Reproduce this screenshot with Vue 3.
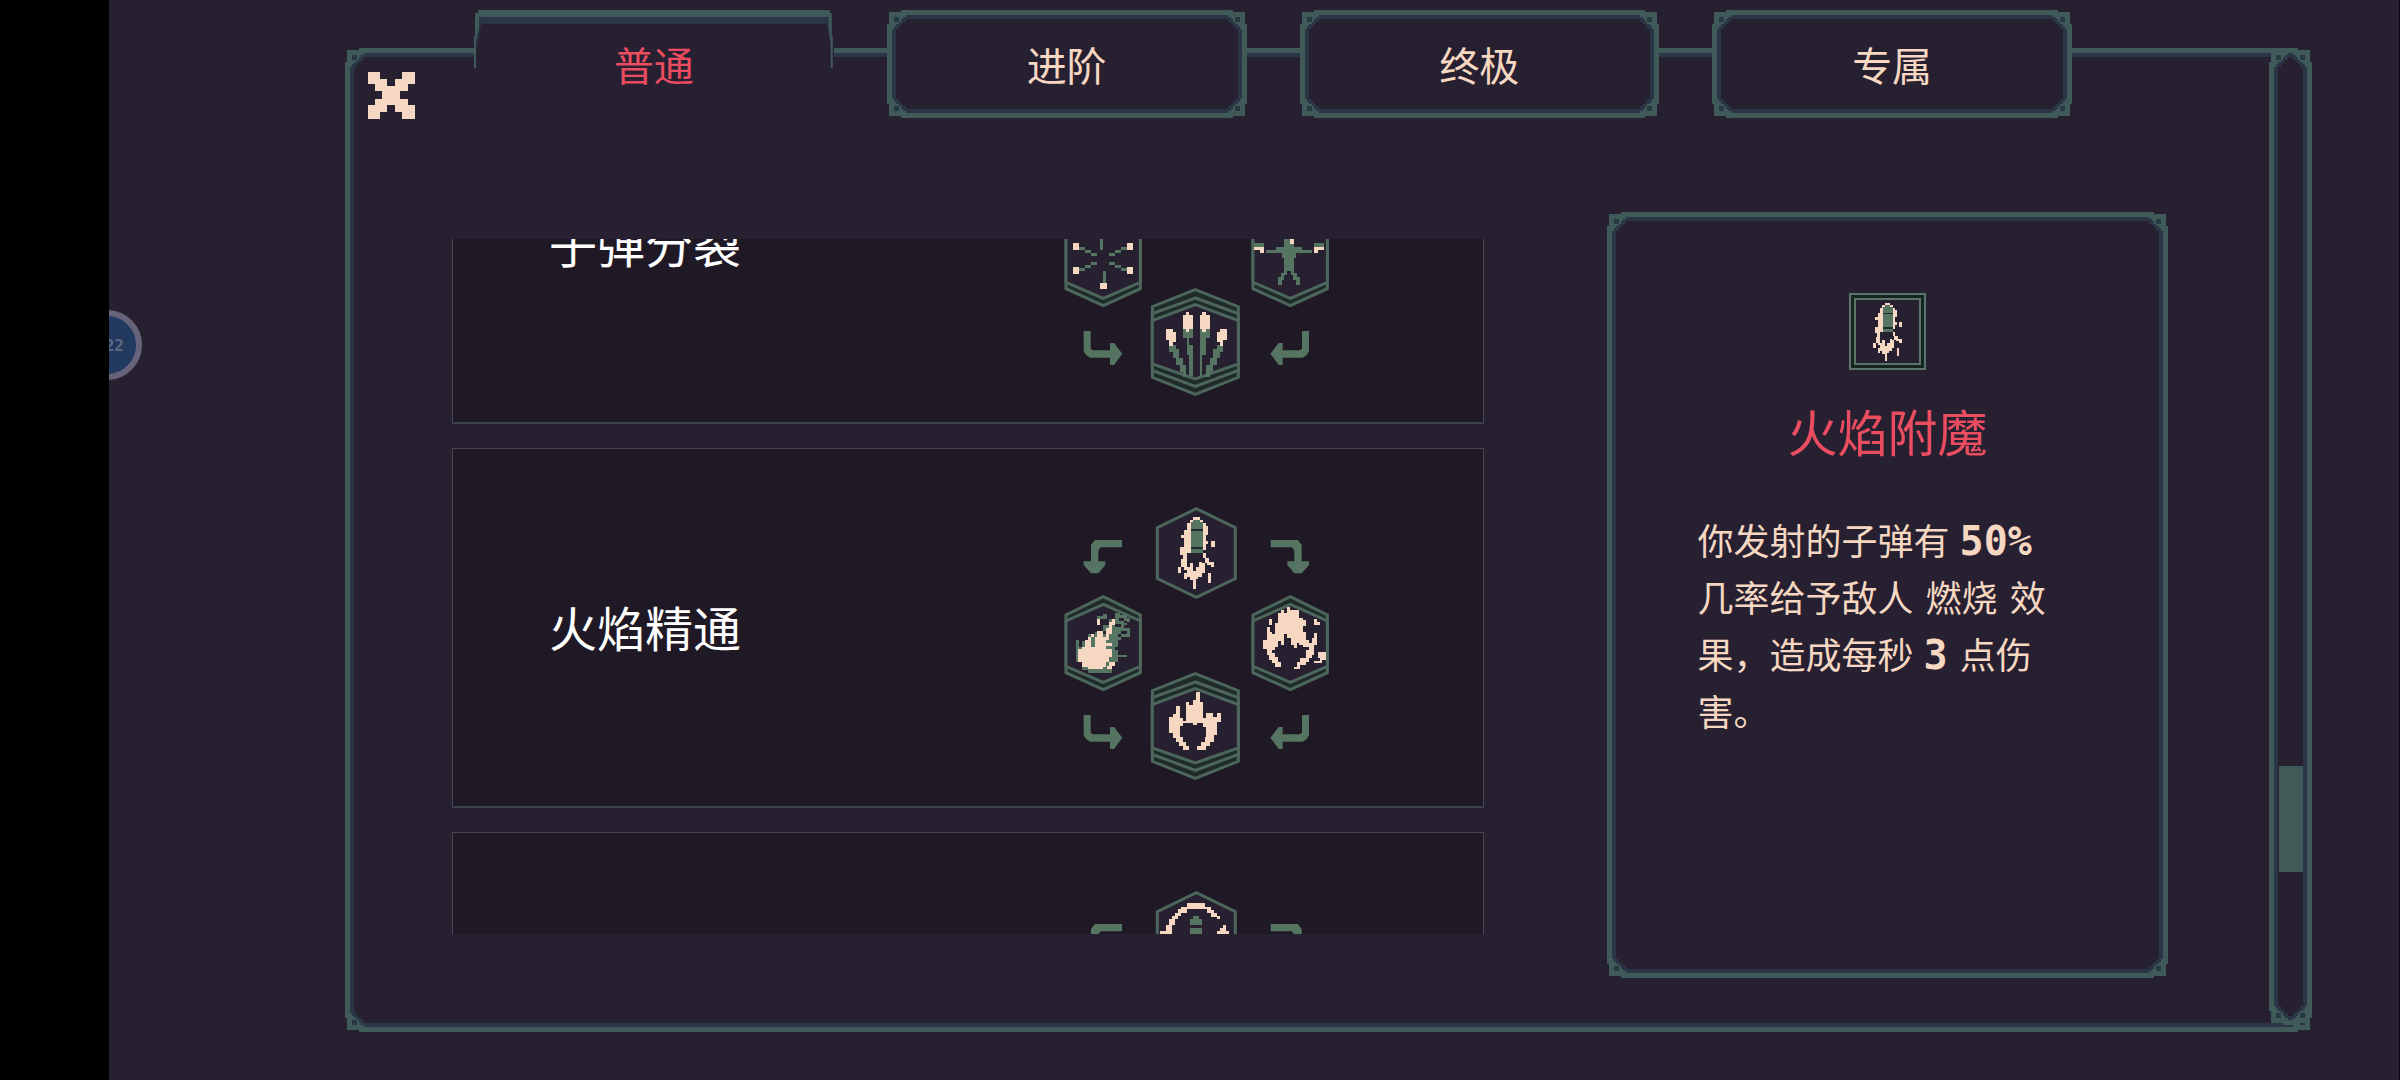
<script setup>
import { ref } from 'vue'

const tabs = ['普通', '进阶', '终极', '专属']
const active = ref(0)

const cards = [
  { key: 'split', name: '子弹分裂' },
  { key: 'fire', name: '火焰精通' },
  { key: 'orbit', name: '' }
]
</script>

<template>
  <div class="app">
    <div class="notch"></div>
    <main class="stage">
      <div class="badge"><span>22</span></div>

      <nav class="tabs">
        <button
          v-for="(tab, i) in tabs"
          :key="tab"
          type="button"
          class="tab"
          :class="i === active ? 'tab-active' : 'framed'"
          @click="active = i"
        >
          <svg v-if="i === active" class="tab-edge" viewBox="0 0 360 108" preserveAspectRatio="none" aria-hidden="true">
            <path fill="#2a3548" d="M5 7H355V14H5Z" />
            <path fill="#405a5a" d="M4 0H356V7H4Z" />
            <path fill="#2a3548" d="M5 10H8L3 36H2Z M355 10H352L357 36H358Z" />
            <path fill="#405a5a" d="M4 0V3H1V26H0V58H2V31L5 18V6Z M356 0V3H358V26H359V58H357V31L355 18V6Z" />
          </svg>
          <span>{{ tab }}</span>
        </button>
      </nav>

      <section class="window">
        <div class="close-col">
          <button type="button" class="close" aria-label="关闭">
            <svg viewBox="0 0 132 139" preserveAspectRatio="none" shape-rendering="crispEdges">
              <path fill="#f6d7c1" d="M0 0H34V20H52V42H76V20H96V0H132V36H111V55H91V81H111V99H132V139H96V119H76V99H52V119H34V139H0V99H19V81H39V55H19V36H0Z" />
            </svg>
          </button>
        </div>

        <div class="list">
          <div class="list-inner">
            <article v-for="card in cards" :key="card.key" class="card">
              <h2>{{ card.name }}</h2>
              <svg class="diagram" viewBox="0 0 930 900" aria-hidden="true">
                <g fill="#567462">
                  <path d="M246 150H165L158 158L153 165V214H131V225L153 250H175L196 225V214H175V182L182 172H246Z" />
                  <path d="M692 150H773L780 158L785 165V214H807V225L785 250H763L742 225V214H763V182L756 172H692Z" />
                  <path d="M131 675H152V728L158 733H210V711H222L247 743L222 777H210V755H150L138 747L131 735Z" />
                  <path d="M807 675H786V728L780 733H728V711H716L691 743L716 777H728V755H788L800 747L807 735Z" />
                </g>
                <g stroke="#4d665b" stroke-width="9" fill="#1e2b2a">
                  <path fill="#272031" d="M469 56L586 113V266L469 322L352 266V113Z" />
                  <path d="M190 320L301 375V548L190 599L78 548V375Z" />
                  <path fill="#272031" d="M190 343L301 393V529L190 577L78 529V393Z" />
                  <path d="M751 320L862 375V548L751 599L639 548V375Z" />
                  <path fill="#272031" d="M751 343L862 393V529L751 577L639 529V393Z" />
                  <path d="M466 551L595 602V814L466 865L337 814V602Z" />
                  <path d="M466 576L595 623V793L466 841L337 793V623Z" />
                  <path fill="#272031" d="M466 596L595 644V774L466 819L337 774V644Z" />
                </g>

                <g v-if="card.key === 'fire'" shape-rendering="crispEdges">
                  <path fill="#f6d7c1" d="M458 81H480V90H490V100H497V108H505V135H497V180H490V190H497V205H507V215H523V232H512V225H500V220H494V250H485V262H475V268H468V297H458V270H450V262H441V268H432V250H441V240H432V232H424V250H415V230H424V208H430V195H421V172H432V145H422V135H432V120H441V100H450V90H458Z M512 153H524V171H512Z M498 153H505V163H498Z M505 250H513V278H505Z" />
                  <path fill="#272031" d="M441 190H490V205H494V220H485V215H477V232H468V243H460V218H450V230H441Z" />
                  <path fill="#567462" d="M458 90H480V97H488V190H452V97H458Z" />
                  <path fill="#1e2b2a" d="M452 118H488V123H452Z M452 172H488V178H452Z" />

                  <path fill="#567462" d="M226 370H240V376H262V385H270V395H262V405H252V415H270V440H243V450H235V470H226V480H235V495H260V502H235V515H226V525H216V550H145V540H125V515H108V450H117V470H126V452H145V432H164V425H190V405H208V387H226Z M172 378H190V372H200V387H181V390H172Z" />
                  <path fill="#272031" d="M238 385H252V393H238Z M226 402H244V412H226Z M243 424H260V432H243Z M252 393H262V400H252Z M235 432H243V442H235Z M190 424H198V432H190Z" />
                  <path fill="#f6d7c1" d="M216 387H226V405H216V432H208V450H198V460H216V467H198V478H216V500H208V515H198V530H190V538H145V530H126V515H115V478H126V470H136V450H145V440H154V432H163V440H154V470H164V442H172V424H188V442H198V415H208V397H216Z M172 387H181V405H172Z M208 515H224V527H216V538H200V527H208Z" />

                  <path fill="#f6d7c1" d="M742 352H750V360H778V385H788V390H797V408H788V427H797V450H806V460H815V445H822V430H832V465H822V495H815V505H806V515H797V525H780V538H762V530H770V515H780V505H797V480H806V470H788V465H778V460H770V475H762V465H752V445H742V432H732V465H724V452H715V472H706V480H697V490H706V500H715V515H724V530H706V520H697V510H688V495H680V478H670V450H680V412H690V425H697V432H706V400H715V370H724V360H733V368H742Z M688 388H697V406H688Z M822 388H832V396H840V404H822Z M833 485H857V510H847V520H822V512H840V504H833Z" />

                  <path fill="#f6d7c1" d="M469 606H480V636H488V684H498V670H520V680H530V670H542V696H532V735H522V755H510V768H498V780H470V768H484V755H494V740H498V710H488V698H470V706H458V698H428V708H419V740H428V755H438V768H448V780H430V768H418V755H408V743H398V730H386V680H398V672H408V647H419V684H428V694H437V636H448V645H458V630H469Z" />
                </g>

                <g v-if="card.key === 'split'" transform="translate(0 372)" shape-rendering="crispEdges">
                  <path fill="#567462" d="M181 20H189V59H181Z M189 123H198V159H189Z M117 51H135V60H117Z M135 60H153V69H135Z M153 69H171V78H153Z M243 51H261V60H243Z M225 60H243V69H225Z M207 69H225V78H207Z M153 95H171V104H153Z M135 104H153V113H135Z M117 113H135V122H117Z M207 95H225V104H207Z M225 104H243V113H225Z M243 113H261V122H243Z" />
                  <path fill="#f6d7c1" d="M98 40H117V59H98Z M261 40H279V59H261Z M98 112H117V131H98Z M261 112H279V131H261Z M180 159H200V178H180Z" />
                  <path fill="#567462" d="M732 20H761V51H787V59H815V69H768V85H762V130H770V142H779V166H768V150H760V135H752V122H742V135H732V150H725V166H715V142H724V130H732V85H725V69H678V59H707V51H732Z M642 40H672V52H642Z M822 40H852V52H822Z" />
                  <path fill="#f6d7c1" d="M750 20H761V41H750Z M642 52H672V69H660V60H642Z M852 50H822V69H834V60H852Z" />
                  <path fill="#567462" d="M430 296H459V325H448V345H459V437H448V375H440V325H430Z M509 296H480V437H487V375H498V325H509Z M388 345H408V356H418V385H428V404H437V440H428V425H420V404H408V385H398V365H388Z M550 345H531V356H520V385H510V404H498V440H509V425H520V404H531V385H541V365H550Z" />
                  <path fill="#f6d7c1" d="M437 246H448V256H459V296H448V306H437V296H429V256H437Z M487 246H498V256H509V296H498V306H487V296H480V256H487Z M379 296H398V306H408V336H398V347H386V330H379Z M560 296H541V306H531V336H541V347H550V330H560Z" />
                </g>

                <g v-if="card.key === 'orbit'" transform="translate(0 -162)" shape-rendering="crispEdges">
                  <path fill="#f6d7c1" d="M441 250H494V260H512V270H521V280H530V288H541V297H530V290H512V280H500V268H441V278H423V288H413V297H405V315H397V345H360V333H378V315H387V297H397V288H405V278H414V268H423V260H441Z M548 315H558V333H566V345H530V333H540V324H548Z" />
                  <path fill="#567462" d="M460 288H477V297H487V315H451V297H460Z M451 323H487V345H451Z" />
                </g>
              </svg>
            </article>
          </div>
        </div>

        <aside class="detail framed">
          <div class="detail-icon">
            <svg viewBox="0 0 110 217" preserveAspectRatio="none" shape-rendering="crispEdges" aria-hidden="true">
              <g transform="translate(-414 -81)">
                <path fill="#f6d7c1" d="M458 81H480V90H490V100H497V108H505V135H497V180H490V190H497V205H507V215H523V232H512V225H500V220H494V250H485V262H475V268H468V297H458V270H450V262H441V268H432V250H441V240H432V232H424V250H415V230H424V208H430V195H421V172H432V145H422V135H432V120H441V100H450V90H458Z M512 153H524V171H512Z M498 153H505V163H498Z M505 250H513V278H505Z" />
                <path fill="#272031" d="M441 190H490V205H494V220H485V215H477V232H468V243H460V218H450V230H441Z" />
                <path fill="#567462" d="M458 90H480V97H488V190H452V97H458Z" />
                <path fill="#1e2b2a" d="M452 118H488V123H452Z M452 172H488V178H452Z" />
              </g>
            </svg>
          </div>
          <h1>火焰附魔</h1>
          <p>你发射的子弹有 <b>50%</b> 几率给予敌人 <em>燃烧</em> 效果，造成每秒 <b>3</b> 点伤害。</p>
        </aside>

        <div class="scrollbar framed"><div class="thumb"></div></div>
      </section>
    </main>
  </div>
</template>

<style>
body {
  margin: 0;
  background: #272031;
}
</style>

<style scoped>
.app {
  display: flex;
  min-height: 100vh;
  background: #272031;
  color: #f6d7c1;
  font-family: "Noto Sans CJK SC", "Noto Sans", sans-serif;
}

.notch {
  flex: none;
  width: 109px;
  background: #000;
}

.stage {
  position: relative;
  flex: 1;
  min-width: 0;
  display: flex;
  flex-direction: column;
  box-sizing: border-box;
  padding: 10px 87px 48px 236px;
  border-right: 1px solid #0c0a10;
  overflow: hidden;
}

/* Pixel frame: double line with a stud in every corner */
.framed,
.window::before {
  border: 21px solid transparent;
  border-image: url("data:image/svg+xml,%3Csvg xmlns='http://www.w3.org/2000/svg' width='63' height='63' viewBox='0 0 27 27' shape-rendering='crispEdges'%3E%3Cdefs%3E%3Cg id='c'%3E%3Cpath fill='%232a3548' d='M2 2H9V4H8V5H7V6H6V7H5V8H4V9H2Z'/%3E%3Cpath fill='%23405a5a' d='M6 0H9V2H8V3H7V4H6V5H5V6H4V7H3V8H2V9H0V6H1V1H6Z'/%3E%3Cpath fill='%23273a42' d='M3 3H5V5H3Z'/%3E%3C/g%3E%3C/defs%3E%3Cpath fill='%23405a5a' d='M9 0H18V2H9ZM9 25H18V27H9ZM0 9H2V18H0ZM25 9H27V18H25Z'/%3E%3Cpath fill='%232a3548' d='M9 2H18V4H9ZM9 23H18V25H9ZM2 9H4V18H2ZM23 9H25V18H23Z'/%3E%3Cuse href='%23c'/%3E%3Cuse href='%23c' transform='matrix(-1 0 0 1 27 0)'/%3E%3Cuse href='%23c' transform='matrix(1 0 0 -1 0 27)'/%3E%3Cuse href='%23c' transform='matrix(-1 0 0 -1 27 27)'/%3E%3C/svg%3E") 21 stretch;
}

.badge {
  position: absolute;
  left: -37px;
  top: 310px;
  box-sizing: border-box;
  width: 70px;
  height: 70px;
  border: 6px solid #67637a;
  border-radius: 50%;
  background: #223a60;
  color: #5e6880;
  display: flex;
  align-items: center;
  justify-content: flex-end;
  padding-right: 12px;
  font: bold 16px "DejaVu Sans Mono", monospace;
}

.tabs {
  position: relative;
  z-index: 1;
  display: grid;
  grid-template-columns: repeat(4, 1fr);
  gap: 53px;
  padding: 0 240px 0 129px;
  margin-bottom: -70px;
}

.tab {
  position: relative;
  box-sizing: border-box;
  height: 108px;
  padding: 0;
  background-color: #272031;
  color: inherit;
  font-family: inherit;
  font-size: 40px;
  line-height: 60px;
  cursor: pointer;
}

.tab-active {
  border: 0;
  color: #ea4c60;
}

.tab-edge {
  position: absolute;
  inset: 0;
  width: 100%;
  height: 100%;
}

.window {
  position: relative;
  flex: 1;
  display: grid;
  grid-template-columns: 107px minmax(0, 1155fr) minmax(0, 662fr) 43px;
}

.window::before {
  content: "";
  position: absolute;
  inset: 0;
  pointer-events: none;
}

.close {
  display: block;
  position: relative;
  margin: 24px 0 0 23px;
  padding: 0;
  border: 0;
  background: none;
  cursor: pointer;
}

.close svg {
  display: block;
  width: 47px;
  height: 47px;
}

.list {
  height: calc(100vh - 385px);
  margin: 191px 123px 0 0;
  overflow: hidden;
}

.list-inner {
  display: flex;
  flex-direction: column;
  gap: 24px;
  margin-top: -175px;
}

.card {
  flex: none;
  box-sizing: border-box;
  height: 360px;
  display: flex;
  align-items: center;
  justify-content: space-between;
  padding: 0 133px 0 96px;
  border: 1px solid #474754;
  border-bottom: 2px solid #3d404e;
  background: #1f1926;
}

.card h2 {
  margin: 0 0 4px;
  color: #fff;
  font-size: 48px;
  font-weight: 400;
  line-height: 60px;
}

.diagram {
  flex: none;
  width: 310px;
  height: 300px;
  margin-top: 24px;
}

.detail {
  box-sizing: border-box;
  display: flex;
  flex-direction: column;
  align-items: center;
  margin: 164px 101px 54px 0;
  padding-top: 60px;
}

.detail-icon {
  box-sizing: border-box;
  width: 77px;
  height: 77px;
  display: flex;
  align-items: center;
  justify-content: center;
  border: 2px solid #5a746b;
  outline: 2px solid #5a746b;
  outline-offset: -7px;
  box-shadow: inset 0 0 0 3px #17251f;
}

.detail-icon svg {
  width: 29px;
  height: 58px;
}

.detail h1 {
  margin: 30px 0 51px;
  color: #ea4c60;
  font-size: 50px;
  font-weight: 400;
  line-height: 60px;
}

.detail p {
  width: 380px;
  margin: 0;
  font-size: 36px;
  line-height: 57px;
}

.detail b {
  margin: 0 4px 0 2px;
  font: bold 40px/40px "DejaVu Sans Mono", monospace;
}

.detail em {
  margin: 0 4px;
  font-style: normal;
}

.scrollbar {
  position: relative;
  box-sizing: border-box;
  margin-bottom: 7px;
}

.thumb {
  position: absolute;
  left: -11px;
  right: -12px;
  top: 74.5%;
  height: 106px;
  background: #405a58;
}
</style>
